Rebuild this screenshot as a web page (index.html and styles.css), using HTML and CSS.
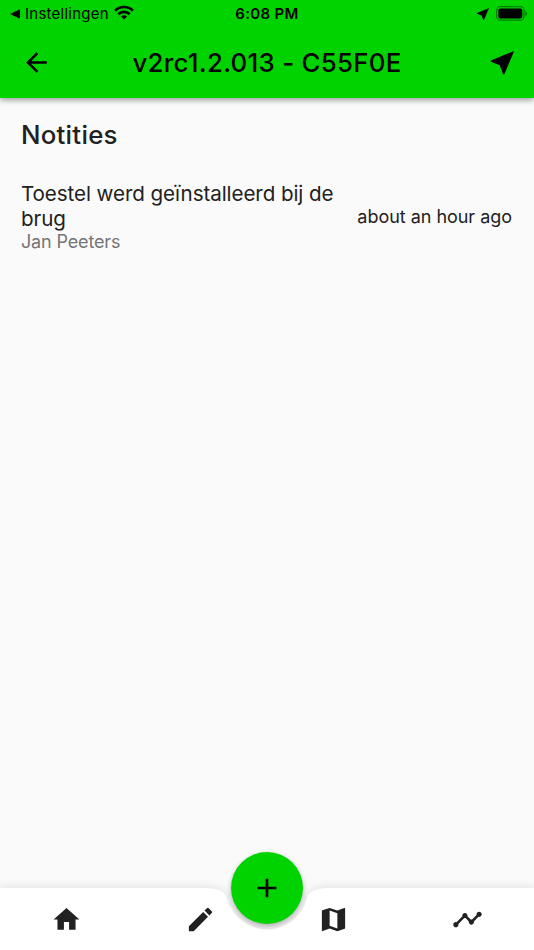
FILE: index.html
```html
<!DOCTYPE html>
<html lang="nl">
<head>
  <meta charset="UTF-8" />
  <meta name="viewport" content="width=device-width, initial-scale=1.0" />
  <title>Notities</title>
  <link rel="stylesheet" href="styles.css">
</head>
<body>
  <div class="app">
    <header>
      <div class="status-bar">
        <div class="status-left">
          <svg class="back-caret" viewBox="0 0 10 10"><path d="M0 5L10 0.3v9.4z"/></svg>
          <span class="status-app">Instellingen</span>
          <svg class="wifi" viewBox="0 0 20 15">
            <path d="M10 14.6L7 11.6a4.3 4.3 0 0 1 6 0z"/>
            <path d="M4.3 9.2a8.1 8.1 0 0 1 11.4 0M1.1 5.7a12.6 12.6 0 0 1 17.8 0" fill="none" stroke="#000" stroke-width="2.7"/>
          </svg>
        </div>
        <div class="status-time">6:08 PM</div>
        <div class="status-right">
          <svg class="location" viewBox="3 3 18 18"><path d="M21 3L3 10.53v.98l6.84 2.65L12.48 21h.98L21 3z"/></svg>
          <svg class="battery" viewBox="0 0 31 15">
            <rect x="0.6" y="0.6" width="27.4" height="13.6" rx="3.8" fill="none" stroke="#000" stroke-opacity="0.4" stroke-width="1.2"/>
            <rect x="2.3" y="2.4" width="24" height="10" rx="2"/>
            <path d="M29.4 5c2.1 1 2.1 4 0 5z" fill-opacity="0.45"/>
          </svg>
        </div>
      </div>
      <div class="toolbar">
        <a href="#" class="icon-btn"><svg viewBox="0 0 24 24"><path d="M20 11H7.83l5.59-5.59L12 4l-8 8 8 8 1.41-1.41L7.83 13H20v-2z"/></svg></a>
        <h1>v2rc1.2.013 - C55F0E</h1>
        <a href="#" class="icon-btn"><svg viewBox="0 0 24 24"><path d="M21 3L3 10.53v.98l6.84 2.65L12.48 21h.98L21 3z"/></svg></a>
      </div>
    </header>

    <main>
      <h2>Notities</h2>
      <div class="note">
        <div class="note-body">
          <p class="note-text">Toestel werd geïnstalleerd bij de brug</p>
          <p class="note-author">Jan Peeters</p>
        </div>
        <span class="note-time">about an hour ago</span>
      </div>
    </main>

    <nav>
      <svg class="nav-shape" viewBox="0 0 534 62">
        <path d="M0 0H205Q224.4 0 227 10.2A41.3 41.3 0 0 0 307 10.2Q309.6 0 329 0H534V62H0z"/>
      </svg>
      <a href="#"><svg viewBox="0 0 24 24"><path d="M10 20v-6h4v6h5v-8h3L12 3 2 12h3v8z"/></svg></a>
      <a href="#"><svg viewBox="0 0 24 24"><path d="M3 17.25V21h3.75L17.81 9.94l-3.75-3.75L3 17.25zM20.71 7.04a1 1 0 0 0 0-1.41l-2.34-2.34a1 1 0 0 0-1.41 0l-1.83 1.83 3.75 3.75 1.83-1.83z"/></svg></a>
      <a href="#"><svg viewBox="0 0 24 24"><path d="M20.5 3l-.16.03L15 5.1 9 3 3.36 4.9c-.21.07-.36.25-.36.48V20.5c0 .28.22.5.5.5l.16-.03L9 18.9l6 2.1 5.64-1.9c.21-.07.36-.25.36-.48V3.5c0-.28-.22-.5-.5-.5zM15 19l-6-2.11V5l6 2.11V19z"/></svg></a>
      <a href="#"><svg viewBox="0 0 24 24"><path d="M23 8c0 1.1-.9 2-2 2-.18 0-.35-.02-.51-.07l-3.56 3.55c.05.16.07.34.07.52 0 1.1-.9 2-2 2s-2-.9-2-2c0-.18.02-.36.07-.52l-2.55-2.55c-.16.05-.34.07-.52.07s-.36-.02-.52-.07l-4.55 4.56c.05.16.07.33.07.51 0 1.1-.9 2-2 2s-2-.9-2-2 .9-2 2-2c.18 0 .35.02.51.07l4.56-4.55C8.02 9.36 8 9.18 8 9c0-1.1.9-2 2-2s2 .9 2 2c0 .18-.02.36-.07.52l2.55 2.55c.16-.05.34-.07.52-.07s.36.02.52.07l3.55-3.56C19.02 8.35 19 8.18 19 8c0-1.1.9-2 2-2s2 .9 2 2z"/></svg></a>
      <button class="fab"><svg viewBox="0 0 24 24"><path d="M19 13h-6v6h-2v-6H5v-2h6V5h2v6h6v2z"/></svg></button>
    </nav>
  </div>
</body>
</html>
```

FILE: styles.css
```css
* {
  box-sizing: border-box;
}

body {
  margin: 0;
  font-family: Inter, 'Liberation Sans', sans-serif;
  background-color: #fafafa;
  color: #212121;
}

.app {
  height: 100vh;
  display: flex;
  flex-direction: column;
  overflow: hidden;
}

svg {
  display: block;
}

header {
  height: 98px;
  background-color: #00d300;
  color: black;
  box-shadow: 0 2px 6px rgba(0, 0, 0, 0.4);
}

.status-bar {
  height: 26px;
  display: grid;
  grid-template-columns: 1fr auto 1fr;
  align-items: center;
  padding: 1px 7px 0 10px;
}

.status-left {
  display: flex;
  align-items: center;
}

.back-caret {
  width: 10px;
  height: 10px;
  margin-right: 5px;
}

.status-app {
  font-size: 15px;
  letter-spacing: 0.25px;
}

.wifi {
  width: 20px;
  height: 15px;
  margin-left: 5px;
  margin-top: -2px;
}

.status-time {
  font-size: 15px;
  font-weight: 600;
  letter-spacing: 0.3px;
  margin-right: 3px;
}

.status-right {
  display: flex;
  align-items: center;
  justify-content: flex-end;
  gap: 7px;
}

.location {
  width: 12px;
  height: 12px;
}

.battery {
  width: 31px;
  height: 15px;
  margin-top: -1px;
}

.toolbar {
  height: 72px;
  display: flex;
  align-items: center;
  justify-content: space-between;
  padding: 0 16px 0 21px;
}

.icon-btn svg {
  width: 31px;
  height: 31px;
  fill: black;
}

h1 {
  margin: 0 5px 0 0;
  font-size: 25.8px;
  font-weight: 500;
  letter-spacing: 0.3px;
}

main {
  flex: 1;
  padding: 21px 22px 0 21px;
}

h2 {
  margin: 0;
  font-size: 25.8px;
  line-height: 32px;
  font-weight: 500;
  letter-spacing: 0.25px;
}

.note {
  display: flex;
  align-items: center;
  justify-content: space-between;
  margin-top: 31px;
}

.note-body {
  width: 320px;
}

.note-text {
  margin: 0;
  font-size: 20.6px;
  line-height: 24.5px;
  letter-spacing: -0.08px;
}

.note-author {
  margin: 0;
  font-size: 18px;
  line-height: 22px;
  letter-spacing: -0.15px;
  color: #757575;
}

.note-time {
  font-size: 18px;
  letter-spacing: -0.03px;
  white-space: nowrap;
  margin-bottom: 2px;
}

nav {
  position: relative;
  height: 62px;
  display: grid;
  grid-template-columns: repeat(4, 1fr);
  align-items: center;
  justify-items: center;
}

nav a {
  position: relative;
}

nav a svg {
  width: 31px;
  height: 31px;
  fill: #212121;
}

.nav-shape {
  position: absolute;
  inset: 0;
  width: 100%;
  height: 100%;
  overflow: visible;
  fill: white;
  filter: drop-shadow(0 -1px 5px rgba(0, 0, 0, 0.1));
}

/* sits in the notch of the bar */
.fab {
  position: absolute;
  top: -36px;
  left: 50%;
  width: 72px;
  height: 72px;
  margin-left: -36px;
  padding: 0;
  display: flex;
  align-items: center;
  justify-content: center;
  border: none;
  border-radius: 50%;
  background-color: #00d300;
  box-shadow: 0 2px 5px rgba(0, 0, 0, 0.3);
  cursor: pointer;
}

.fab svg {
  width: 32px;
  height: 32px;
}
```
